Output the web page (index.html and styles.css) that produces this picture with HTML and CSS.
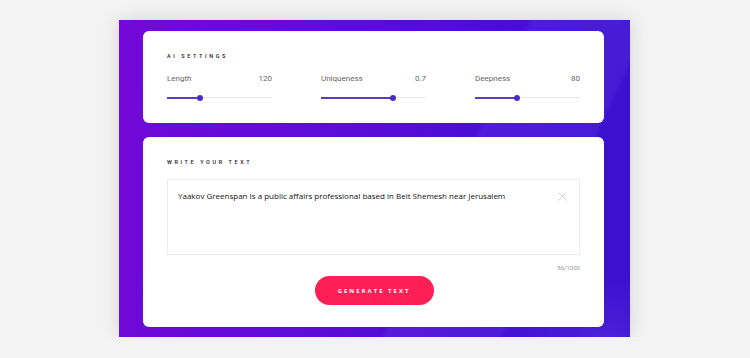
FILE: index.html
```html
<!DOCTYPE html>
<html lang="en">
<head>
    <meta charset="UTF-8">
    <meta name="viewport" content="width=device-width, initial-scale=1.0">
    <title>AI Writer</title>
    <link rel="stylesheet" href="styles.css">
</head>
<body>
    <div class="panel">
        <div class="card settings">
            <p class="caption">AI Settings</p>
            <div class="sliders">
                <div class="slider">
                    <div class="slider-head"><span>Length</span><span>120</span></div>
                    <div class="track"><div class="fill" style="width: 31%"></div></div>
                </div>
                <div class="slider">
                    <div class="slider-head"><span>Uniqueness</span><span>0.7</span></div>
                    <div class="track"><div class="fill" style="width: 69%"></div></div>
                </div>
                <div class="slider">
                    <div class="slider-head"><span>Deepness</span><span>80</span></div>
                    <div class="track"><div class="fill" style="width: 40%"></div></div>
                </div>
            </div>
        </div>
        <div class="card writer">
            <p class="caption">Write your text</p>
            <div class="textbox">
                <p class="entry">Yaakov Greenspan Is a public affairs professional based in Beit Shemesh near Jerusalem</p>
                <svg class="clear" width="9" height="9" viewBox="0 0 9 9">
                    <path d="M0.5 0.5 L8.5 8.5 M8.5 0.5 L0.5 8.5" stroke="#c8c8c8" stroke-width="0.8" fill="none"/>
                </svg>
            </div>
            <div class="counter">86/1000</div>
            <div class="actions">
                <button class="generate">Generate text</button>
            </div>
        </div>
    </div>
</body>
</html>
```

FILE: styles.css
```css
body
{
    margin: 0;
    background-color: #f3f3f3;
    font-family: Roboto, "Liberation Sans", sans-serif;
}
.panel
{
    width: 511px;
    margin: 20px 0 0 119px;
    padding: 11px 26px 10px 24px;
    box-sizing: border-box;
    display: flex;
    flex-direction: column;
    gap: 14px;
    background:
        linear-gradient(115deg, rgba(120, 80, 240, 0) 62%, rgba(120, 80, 240, 0.18) 63%, rgba(120, 80, 240, 0.18) 80%, rgba(120, 80, 240, 0) 81%),
        radial-gradient(ellipse 160px 90px at 95% 100%, rgba(120, 80, 240, 0.25), rgba(120, 80, 240, 0) 70%),
        linear-gradient(100deg, #7408d7 0%, #5c0cd6 45%, #4010d1 80%, #3a10cf 100%);
    box-shadow: 0 0 18px rgba(0, 0, 0, 0.13);
}
.card
{
    background-color: #ffffff;
    border-radius: 6px;
    padding: 0 24px;
}
.settings
{
    height: 92px;
    padding-top: 22px;
    box-sizing: border-box;
}
.writer
{
    height: 190px;
    padding-top: 22px;
    box-sizing: border-box;
}
.caption
{
    margin: 0;
    font-size: 5.5px;
    line-height: 7px;
    font-weight: 500;
    letter-spacing: 2.6px;
    text-transform: uppercase;
    color: #222222;
}
.sliders
{
    display: flex;
    gap: 49px;
    margin-top: 14px;
}
.slider
{
    width: 105px;
}
.slider-head
{
    display: flex;
    justify-content: space-between;
    font-size: 8px;
    line-height: 10px;
    color: #666666;
}
.track
{
    margin-top: 13px;
    height: 1px;
    background-color: #e8e8e8;
    position: relative;
}
.fill
{
    height: 1.5px;
    background-color: #5a3bc6;
    position: relative;
}
.fill::after
{
    content: "";
    position: absolute;
    right: -3px;
    top: -2.5px;
    width: 6px;
    height: 6px;
    border-radius: 50%;
    background-color: #4a2dbf;
}
.textbox
{
    margin-top: 13px;
    height: 76px;
    border: 1px solid #ececec;
    box-sizing: border-box;
    padding: 10px 10px 0 10px;
    display: flex;
    justify-content: space-between;
    align-items: flex-start;
}
.entry
{
    margin: 0;
    font-family: "Open Sans", "Noto Sans", sans-serif;
    font-size: 8px;
    line-height: 12px;
    color: #111111;
}
.clear
{
    margin-top: 2px;
    margin-right: 2px;
}
.counter
{
    margin-top: 9px;
    text-align: right;
    font-size: 6px;
    line-height: 8px;
    color: #9a9a9a;
}
.actions
{
    display: flex;
    justify-content: center;
    margin-top: 4px;
}
.generate
{
    width: 119px;
    height: 29px;
    border: none;
    border-radius: 15px;
    background-color: #fd1f55;
    color: #ffffff;
    font-family: "Open Sans", sans-serif;
    font-size: 6px;
    font-weight: bold;
    letter-spacing: 2px;
    text-transform: uppercase;
    padding: 0;
    margin-left: 1px;
}
```
